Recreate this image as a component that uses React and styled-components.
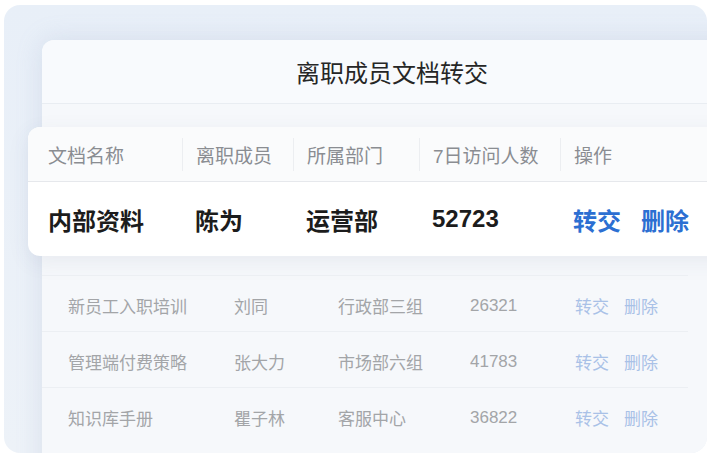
import React from 'react'
import styled, { createGlobalStyle } from 'styled-components'

const GlobalStyle = createGlobalStyle`
  html, body {
    margin: 0;
    background: #ffffff;
  }
  body {
    font-family: "Liberation Sans", "Noto Sans CJK SC", sans-serif;
  }
`

const Frame = styled.div`
  margin: 5px 0 0 4px;
  width: 703px;
  height: 448px;
  border-radius: 16px;
  overflow: hidden;
  background: linear-gradient(180deg, #e8eff8 0%, #edf2f8 100%);
  padding: 35px 0 0 38px;
  box-sizing: border-box;
`

const Panel = styled.div`
  width: 700px;
  border-radius: 12px 12px 0 0;
  background: #f6f8fb;
  box-shadow: 0 0 26px rgba(140, 160, 195, 0.22);
  padding-bottom: 40px;
`

const Title = styled.div`
  height: 63px;
  display: flex;
  align-items: center;
  justify-content: center;
  font-size: 24px;
  color: #262626;
  background: #f8fafd;
  border-radius: 12px 12px 0 0;
  border-bottom: 1px solid #e9edf2;
`

const Card = styled.div`
  margin: 23px 0 19px -14px;
  width: 720px;
  background: #ffffff;
  border-radius: 12px;
  box-shadow: 0 6px 22px rgba(60, 80, 120, 0.08);
`

const CardHead = styled.div`
  display: grid;
  grid-template-columns: 154px 111px 126px 141px 1fr;
  align-items: center;
  height: 54px;
  background: #fafbfc;
  border-radius: 12px 12px 0 0;
  border-bottom: 1px solid #e6e8ec;
`

const HeadCell = styled.div`
  height: 33px;
  display: flex;
  align-items: center;
  padding-left: ${p => (p.$first ? '20px' : '13px')};
  border-left: ${p => (p.$first ? 'none' : '1px solid #eceef1')};
  font-size: 19px;
  color: #8a8d92;
`

const CardBody = styled.div`
  display: grid;
  grid-template-columns: 154px 111px 126px 141px 1fr;
  align-items: center;
  height: 74px;
`

const BodyCell = styled.div`
  padding-left: ${p => (p.$first ? '20px' : '13px')};
  font-size: 24px;
  font-weight: ${p => (p.$num ? 600 : 700)};
  color: #1c1c1c;
  display: flex;
  gap: 20px;
`

const Action = styled.span`
  color: ${p => (p.$faded ? '#a9c1e7' : '#2c6fd2')};
  font-weight: ${p => (p.$faded ? 400 : 700)};
`

const Rows = styled.div`
  width: 646px;
`

const Row = styled.div`
  display: grid;
  grid-template-columns: 166px 104px 132px 105px 1fr;
  align-items: center;
  height: 56px;
  padding: 4px 0 0 26px;
  box-sizing: border-box;
  border-top: 1px solid #eceff3;
  font-size: 17px;
  color: #a3a5a8;
`

const Actions = styled.div`
  display: flex;
  gap: 15px;
`

const others = [
  ['新员工入职培训', '刘同', '行政部三组', '26321'],
  ['管理端付费策略', '张大力', '市场部六组', '41783'],
  ['知识库手册', '瞿子林', '客服中心', '36822'],
]

const heads = ['文档名称', '离职成员', '所属部门', '7日访问人数', '操作']

export default function App() {
  return (
    <>
      <GlobalStyle />
      <Frame>
        <Panel>
          <Title>离职成员文档转交</Title>
          <Card>
            <CardHead>
              {heads.map((h, i) => (
                <HeadCell key={h} $first={i === 0}>{h}</HeadCell>
              ))}
            </CardHead>
            <CardBody>
              <BodyCell $first>内部资料</BodyCell>
              <BodyCell>陈为</BodyCell>
              <BodyCell>运营部</BodyCell>
              <BodyCell $num>52723</BodyCell>
              <BodyCell>
                <Action>转交</Action>
                <Action>删除</Action>
              </BodyCell>
            </CardBody>
          </Card>
          <Rows>
            {others.map(r => (
              <Row key={r[0]}>
                <span>{r[0]}</span>
                <span>{r[1]}</span>
                <span>{r[2]}</span>
                <span>{r[3]}</span>
                <Actions>
                  <Action $faded>转交</Action>
                  <Action $faded>删除</Action>
                </Actions>
              </Row>
            ))}
          </Rows>
        </Panel>
      </Frame>
    </>
  )
}
